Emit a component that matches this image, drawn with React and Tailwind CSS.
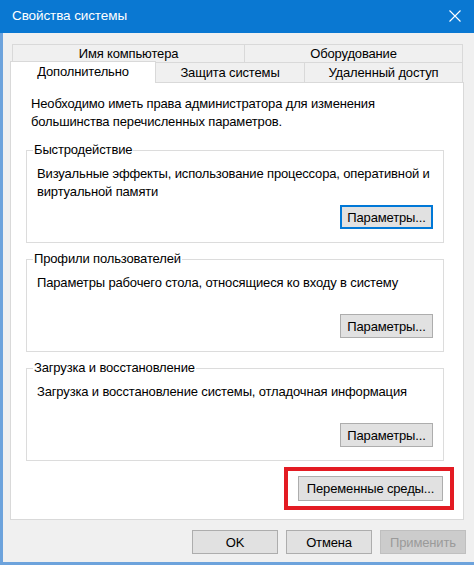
const FONT = { fontFamily: '"Liberation Sans", Arial, sans-serif' };

function Btn({ children, focused, disabled, className = "" }) {
  const tone = disabled
    ? "bg-[#cccccc] border border-[#bfbfbf] text-[#9a9a9a]"
    : focused
    ? "bg-[#e1e1e1] border-2 border-[#0078d7] text-black"
    : "bg-[#e1e1e1] border border-[#adadad] text-black";
  return (
    <button type="button" className={`h-[24px] flex items-center justify-center text-[13px] tracking-[-0.15px] leading-none ${tone} ${className}`}>
      {children}
    </button>
  );
}

function Group({ title, text, focused }) {
  return (
    <fieldset className="ml-[15px] mr-[19px] border border-[#dcdcdc] px-[10px] pb-[13px] pt-[6px]">
      <legend className="ml-[-4px] px-[1px] text-[13px] tracking-[-0.15px] leading-[18px] text-black">{title}</legend>
      <p className="h-[36px] text-[13px] tracking-[-0.15px] leading-[18px] text-black">{text}</p>
      <div className="mt-[4px] flex justify-end">
        <Btn focused={focused} className="w-[93px]">Параметры...</Btn>
      </div>
    </fieldset>
  );
}

export default function App() {
  return (
    <div className="w-[474px] h-[565px] flex flex-col bg-[#f0f0f0] overflow-hidden" style={FONT}>
      {/* Title bar */}
      <div className="h-[33px] shrink-0 bg-[#0a78d2] flex items-center justify-between pl-[12px] pr-[13px]">
        <span className="text-white text-[13.5px] tracking-[-0.1px] leading-none pb-[1px]">Свойства системы</span>
        <svg width="12" height="12" viewBox="0 0 12 12" className="text-white mb-[1px]">
          <path d="M0.5 0.5 L11.5 11.5 M11.5 0.5 L0.5 11.5" stroke="currentColor" strokeWidth="1.1" fill="none" />
        </svg>
      </div>

      <div className="flex-1 flex flex-col border-l-[3px] border-b-[3px] border-[#6da3dc] pl-[7px] pr-[10px] pt-[11px]">
        {/* Tabs */}
        <div className="flex h-[18px] ml-[2px] mr-[1px] text-[13px] tracking-[-0.15px] leading-none text-black">
          <div className="w-[233px] border border-b-0 border-[#d9d9d9] flex items-center justify-center">Имя компьютера</div>
          <div className="flex-1 border border-b-0 border-l-0 border-[#d9d9d9] flex items-center justify-center">Оборудование</div>
        </div>
        <div className="flex items-end h-[20px] text-[13px] tracking-[-0.15px] leading-none text-black">
          <div className="relative z-10 w-[146px] h-[22px] -mb-px bg-white border border-b-0 border-[#d9d9d9] flex items-center justify-center pb-[2px]">Дополнительно</div>
          <div className="w-[149px] h-[20px] border border-l-0 border-b-0 border-[#d9d9d9] flex items-center justify-center">Защита системы</div>
          <div className="flex-1 mr-[1px] h-[20px] border border-l-0 border-b-0 border-[#d9d9d9] flex items-center justify-center">Удаленный доступ</div>
        </div>

        {/* Panel */}
        <div className="h-[438px] shrink-0 bg-white border border-[#d9d9d9] flex flex-col">
          <p className="pl-[20px] pt-[12px] text-[13px] tracking-[-0.15px] leading-[18px] text-black">
            Необходимо иметь права администратора для изменения
            <br />
            большинства перечисленных параметров.
          </p>
          <div className="mt-[10px] flex flex-col gap-[7px]">
            <Group
              title="Быстродействие"
              focused
              text={<>Визуальные эффекты, использование процессора, оперативной и<br />виртуальной памяти</>}
            />
            <Group title="Профили пользователей" text="Параметры рабочего стола, относящиеся ко входу в систему" />
            <Group title="Загрузка и восстановление" text="Загрузка и восстановление системы, отладочная информация" />
          </div>
          <div className="mt-[15px] flex justify-end pr-[20px]">
            <div className="relative">
              <Btn className="w-[145px] h-[25px]">Переменные среды...</Btn>
              <span className="pointer-events-none absolute -left-[14px] -right-[11px] -top-[9px] -bottom-[9px] border-4 border-[#e31b23]" />
            </div>
          </div>
        </div>

        {/* Dialog buttons */}
        <div className="mt-[10px] flex justify-end gap-2">
          <Btn className="w-[86px]">OK</Btn>
          <Btn className="w-[86px]">Отмена</Btn>
          <Btn disabled className="w-[86px] -mr-[2px]">Применить</Btn>
        </div>
      </div>
    </div>
  );
}
